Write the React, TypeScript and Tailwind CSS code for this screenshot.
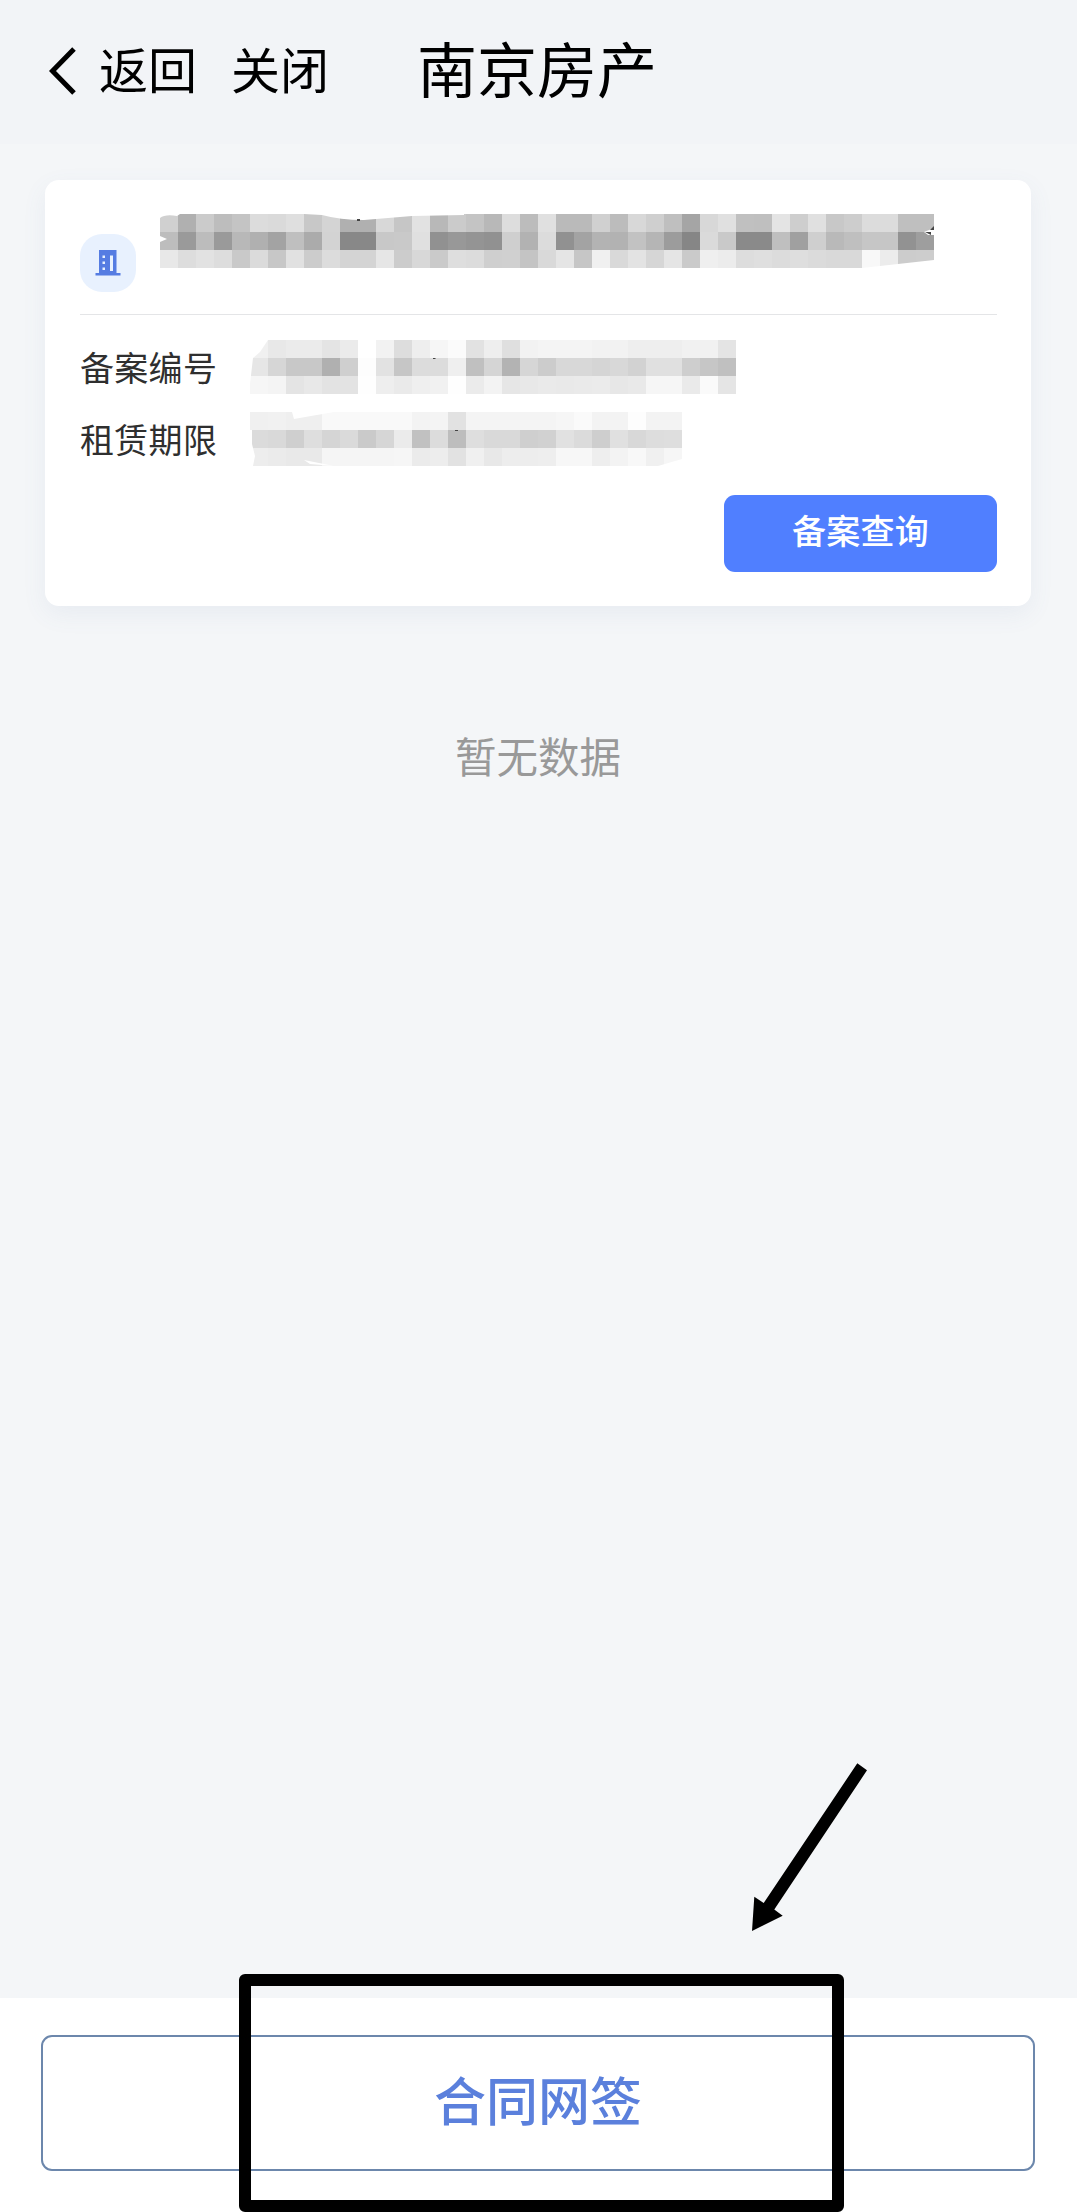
const CELL = 18;

// grey level of every cell, two hex digits each, one string per row of cells
const addressRows = [
  "d0b0cbbdc4dcdadfc8d4b0b0d8c6e2b8cbc4b8ddbce0babad0bcd8cfbfa5d8e0c0bfe4cee0c8cddcdcbfbf",
  "bd9abc9ab8b0a3bfabd38888c8c9e091989491cfb2dc91a3b3b2c2b59c86dac98a8abfa0cfb9bfc6c6929e",
  "e8dde2ddc9dbc7e1ccdcd4d4e6ccd8cadedccfd0c4d9e5c6f0d9e3d6e5caefecdddfdcdedbd9d9f8eccccd",
];

const numberRows = [
  "f0e8ebebe4ebfff2ddeef6fbe2eedff2f4f4f4f2f2eeeeeef1f1e4",
  "e6d6c8c8b0cffde2c6dcdcefc0d5b3d6ccd8d8d5d8d2e0e0cec6c0",
  "f6f4e4e8e3e3feeeeaeff1feebf3e6e8eae9eaebe7e9f6f6eafae5",
];

const periodRows = [
  "f0f1efeff9f9f9f9f9f3f4e2f4f4f4f4f4f6faf3f3fdf3f3",
  "dbd9cfded5dacad6ebc1dcbdded9d9cfd1e1dbcee0d8ddde",
  "edebe9e9f5f5f5f5f6ebede2f0e8ededeef7f7eef3f8f0f6",
];

type MosaicProps = {
  rows: string[];
  cuts: string[];
  specks?: string[];
};

// Pixelated strip hiding private data; cuts are the white bites at its edges
const Mosaic = ({ rows, cuts, specks = [] }: MosaicProps) => {
  const width = (rows[0].length / 2) * CELL;
  return (
    <svg
      width={width}
      height={CELL * 3}
      viewBox={`0 0 ${width} ${CELL * 3}`}
      shapeRendering="crispEdges"
      className="block shrink-0"
      aria-hidden="true"
    >
      {rows.map((row, y) =>
        (row.match(/../g) ?? []).map((level, x) => (
          <rect
            key={`${x}-${y}`}
            x={x * CELL}
            y={y * CELL}
            width={CELL}
            height={CELL}
            fill={`#${level}${level}${level}`}
          />
        ))
      )}
      {cuts.map((d) => (
        <path key={d} d={d} fill="#fff" shapeRendering="auto" />
      ))}
      {specks.map((d) => (
        <path key={d} d={d} fill="#444" shapeRendering="auto" />
      ))}
    </svg>
  );
};

const BuildingIcon = () => (
  <svg width="26" height="26" viewBox="0 0 26 26" aria-hidden="true">
    <path d="M4 0h17.500v23h4v2.500H.5V23H4z" fill="#557ce2" />
    <path
      d="M7.500 5.500h2.500v2.500H7.500zM7.500 11.500h2.500v2.500H7.500zM7.500 17.500h2.500v2.500H7.500zM15 5.500h3v15.500h-3z"
      fill="#e8f1fe"
    />
  </svg>
);

const Header = () => (
  <header className="flex h-[144px] items-start bg-[#f2f4f7] pl-[48px] text-black">
    <svg width="28" height="48" viewBox="0 0 28 48" fill="none" className="mt-[47px]" aria-hidden="true">
      <path d="M26 2 4.500 24 26 46" stroke="#000" strokeWidth="5" />
    </svg>
    <span className="ml-[23px] mt-[32px] text-[49px] leading-[72px]">返回</span>
    <span className="ml-[34px] mt-[32px] text-[49px] leading-[72px]">关闭</span>
    <h1 className="ml-[88px] mt-[22px] text-[60px] leading-[90px] font-normal">南京房产</h1>
  </header>
);

const RecordCard = () => (
  <section className="ml-[45px] mt-9 h-[426px] w-[986px] rounded-[14px] bg-white pl-[35px] pr-[34px] shadow-[0_8px_24px_rgba(90,120,170,0.08)]">
    <div className="flex h-[135px] items-start border-b border-[#e4e5e7]">
      <div className="mt-[54px] flex h-[58px] w-[56px] items-center justify-center rounded-[22px] bg-[#e8f1fe]">
        <BuildingIcon />
      </div>
      <div className="ml-6 mt-[34px]">
        <Mosaic
          rows={addressRows}
          cuts={[
            "M0 0H20L17 2Q5 0 0 4Z",
            "M0 22L7 25L0 28Z",
            "M144 0H304V1L252 2L204 6Q180 6 162 1Z",
            "M774 14L764 18L768 21H774Z",
            "M774 46L720 52L702 54H774Z",
          ]}
          specks={["M197 5h3v2h-3z", "M774 12l-4 4h4z", "M765 18h6v3z"]}
        />
      </div>
    </div>
    <div className="mt-[25px] flex items-center text-[34px] text-[#2f2f2f]">
      <span className="w-[170px] leading-[54px] tracking-[0.3px]">备案编号</span>
      <Mosaic
        rows={numberRows}
        cuts={["M0 0H18L10 12L3 18L0 44Z"]}
        specks={["M183 18h2.500v1h-2.500z"]}
      />
    </div>
    <div className="mt-[18px] flex items-center text-[34px] text-[#2f2f2f]">
      <span className="w-[170px] leading-[54px] tracking-[0.3px]">租赁期限</span>
      <Mosaic
        rows={periodRows}
        cuts={["M42 0H84L44 7Z", "M0 18L2 18V32L5 44L3 54H0Z", "M54 48L84 54L60 52Z", "M432 47L408 54H432Z"]}
        specks={["M205 18h3v1h-3z"]}
      />
    </div>
    <div className="mt-[29px] flex justify-end">
      <button className="h-[77px] w-[273px] rounded-[11px] bg-[#507fff] pb-[8px] text-[34px] font-medium tracking-[0.3px] text-white">
        备案查询
      </button>
    </div>
  </section>
);

const SignBar = () => (
  <footer className="relative h-[214px] bg-white pl-[41px] pr-[42px] pt-[37px]">
    <button className="h-[136px] w-full rounded-[11px] border-2 border-[#6c87ac] pb-[9px] text-[52px] font-medium text-[#5b80dc]">
      合同网签
    </button>
    {/* Marker frame over the button */}
    <div className="absolute -top-6 left-[239px] h-[238px] w-[605px] rounded-[6px] border-[12px] border-black" />
    {/* Arrow pointing at the frame */}
    <svg
      className="absolute -top-[238px] left-[748px]"
      width="124"
      height="176"
      viewBox="748 1760 124 176"
      aria-hidden="true"
    >
      <path d="M857.300 1763.300L867 1770.300L774.300 1909.500L782.700 1915.700L752 1931L754.300 1896.700L763.700 1902.900Z" />
    </svg>
  </footer>
);

export default function App() {
  return (
    <div className="flex h-[2212px] w-[1077px] flex-col overflow-hidden bg-[#f4f6f8] font-['Noto_Sans_CJK_SC',sans-serif]">
      <Header />
      <main className="flex-1">
        <RecordCard />
        <p className="mt-[118px] pr-px text-center text-[41.500px] leading-[62px] text-[#999]">暂无数据</p>
      </main>
      <SignBar />
    </div>
  );
}
